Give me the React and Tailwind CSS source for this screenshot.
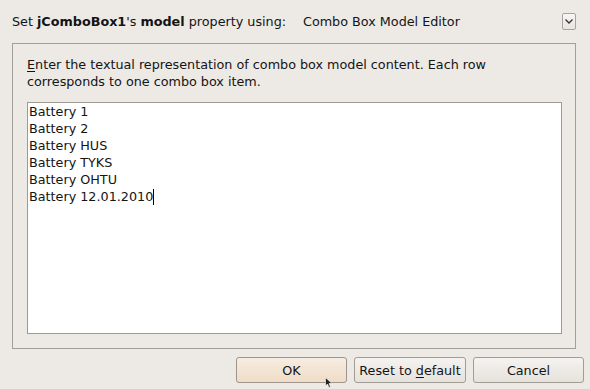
export default function App() {
  const lines = ["Battery 1", "Battery 2", "Battery HUS", "Battery TYKS", "Battery OHTU"];
  return (
    <div
      className="relative w-[590px] h-[389px] overflow-hidden bg-[#edeae6] text-[12.75px] leading-[17px] text-[#141414]"
      style={{ fontFamily: '"DejaVu Sans", Verdana, sans-serif' }}
    >
      {/* header */}
      <div className="flex items-center h-[18px] mt-[12px] pl-[12px]">
        <span className="w-[291px]">
          Set <b>jComboBox1</b>'s <b>model</b> property using:
        </span>
        <span>Combo Box Model Editor</span>
        <div className="ml-auto mr-[14px] w-[14px] h-[17px] border border-[#a8a49d] rounded-[2px] bg-gradient-to-b from-[#f7f6f4] to-[#e8e5e0] flex items-center justify-center">
          <svg width="8" height="5" viewBox="0 0 8 5">
            <path d="M0.5 0.5 L4 4 L7.5 0.5" fill="none" stroke="#333" strokeWidth="1.3" />
          </svg>
        </div>
      </div>

      {/* panel */}
      <div className="mt-[13px] ml-[12px] w-[564px] h-[306px] border border-[#a39e96] pt-[12px] pl-[14px] pr-[13px] flex flex-col">
        <p>
          <span className="underline underline-offset-2">E</span>nter the textual representation of combo box model content. Each row
          <br />
          corresponds to one combo box item.
        </p>
        <div className="mt-[12px] w-[535px] h-[232px] bg-white border border-[#9e9a91] pl-[1px] leading-[17px]">
          {lines.map((l) => (
            <div key={l} className="h-[17px]">{l}</div>
          ))}
          <div className="flex items-center h-[17px]">
            <span>Battery 12.01.2010</span>
            <span className="inline-block w-[1px] h-[16px] bg-black" />
          </div>
        </div>
      </div>

      {/* buttons */}
      <div className="flex justify-end gap-[7px] mt-[8px] pr-[6px]">
        <button className="w-[111px] h-[26px] rounded-[3px] border border-[#9b958c] bg-gradient-to-b from-[#f6ede2] to-[#f0dcc6] flex items-center justify-center">
          OK
        </button>
        <button className="w-[112px] h-[26px] rounded-[3px] border border-[#a19c94] bg-gradient-to-b from-[#f5f3f0] to-[#e6e2dc] flex items-center justify-center">
          Reset to <span className="underline underline-offset-2 ml-[4px]">d</span>efault
        </button>
        <button className="w-[111px] h-[26px] rounded-[3px] border border-[#a19c94] bg-gradient-to-b from-[#f5f3f0] to-[#e6e2dc] flex items-center justify-center">
          Cancel
        </button>
      </div>

      {/* mouse cursor */}
      <svg className="absolute left-[325px] top-[377px]" width="8" height="12" viewBox="0 0 8 12">
        <path d="M0.5 0.5 L0.5 9 L2.5 7 L4 10.5 L5.5 10 L4 6.5 L7 6.5 Z" fill="#222" stroke="#fff" strokeWidth="0.6" />
      </svg>
    </div>
  );
}
